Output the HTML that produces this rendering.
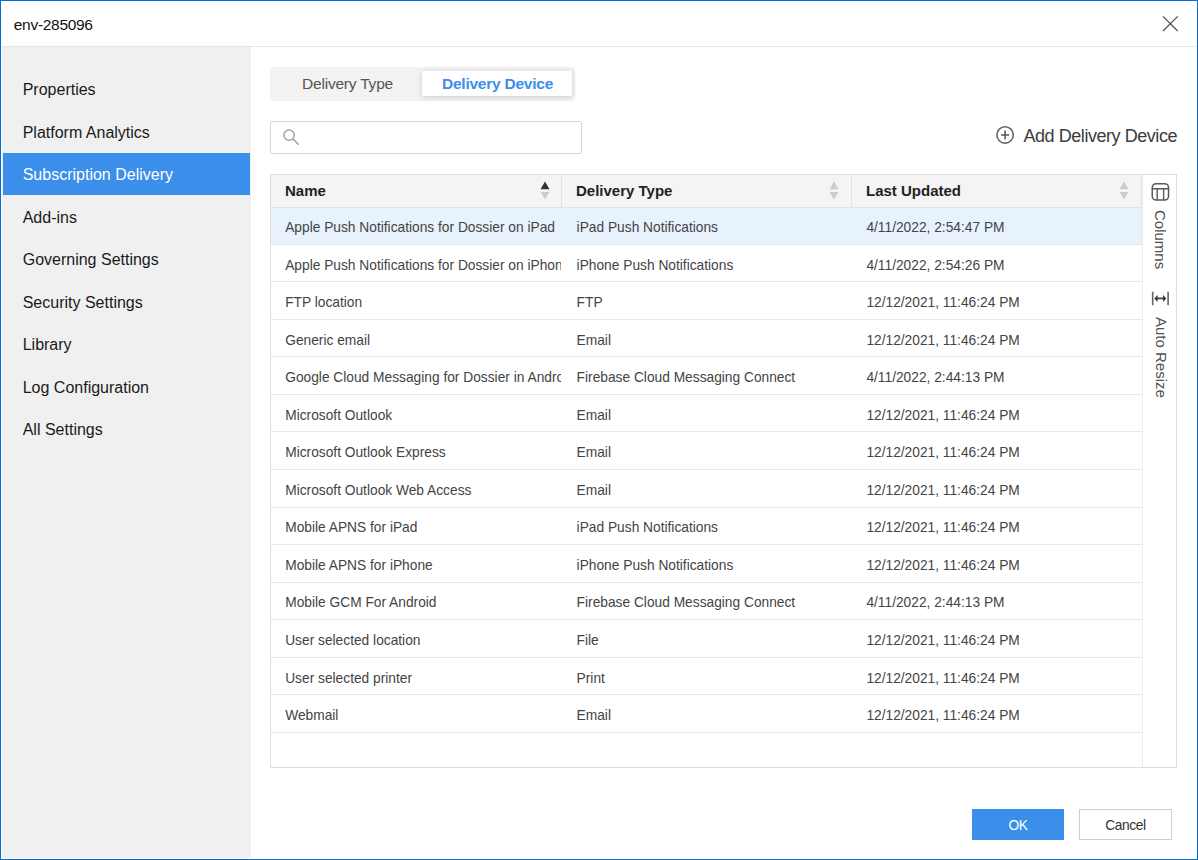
<!DOCTYPE html>
<html><head><meta charset="utf-8"><style>
*{margin:0;padding:0;box-sizing:border-box}
html,body{width:1198px;height:860px;overflow:hidden;background:#fff;font-family:"Liberation Sans",sans-serif}
.abs{position:absolute}
.bl{position:absolute;background:#006fd6}
.title{position:absolute;left:13.8px;top:14.6px;font-size:15.5px;letter-spacing:-0.3px;line-height:20px;color:#111;white-space:nowrap}
.hdrline{position:absolute;left:2px;top:46px;width:1195px;height:1px;background:#e6e6e6}
.close{position:absolute;left:1161px;top:14px}
.side{position:absolute;left:2px;top:47px;width:249px;height:811px;background:#f0f0f0}
.si{position:absolute;left:2px;width:249px;height:42.5px;line-height:42.5px;padding-left:20.7px;padding-top:1.4px;font-size:16px;color:#1a1a1a;white-space:nowrap}
.si.sel{background:#3b8eea;color:#fff;left:3px;width:247px;height:41.8px;padding-left:19.7px}
.tabs{position:absolute;left:270px;top:67px;width:305px;height:34px;background:#f3f3f3;border-radius:4px}
.t1{position:absolute;left:302px;top:71.8px;line-height:24px;font-size:15.5px;letter-spacing:-0.2px;color:#555;white-space:nowrap}
.t2{position:absolute;left:422px;top:71px;width:150px;height:25px;background:#fff;box-shadow:0 1px 6px rgba(0,0,0,.16);}
.t2 span{position:absolute;left:20px;top:0px;line-height:25px;font-size:15.5px;letter-spacing:-0.24px;font-weight:bold;color:#3b8eea;white-space:nowrap}
.search{position:absolute;left:270px;top:121px;width:312px;height:33px;border:1px solid #d6d6d6;border-radius:2px;background:#fff}
.sic{position:absolute;left:282px;top:129px}
.add{position:absolute;left:1023.5px;top:123.6px;font-size:18px;letter-spacing:-0.45px;line-height:24px;color:#3c3c3c;white-space:nowrap}
.addic{position:absolute;left:995px;top:125px}
.table{position:absolute;left:270px;top:173.6px;width:907px;height:594.4px;border:1px solid #dedede;background:#fff}
.thead{position:absolute;left:271px;top:175px;width:871px;height:33px;background:#f4f4f4;border-bottom:1px solid #e2e2e2}
.th{position:absolute;top:173.7px;height:33px;line-height:33px;font-size:15px;font-weight:bold;color:#222;white-space:nowrap}
.vdiv{position:absolute;top:175px;width:1px;height:33px;background:#e2e2e2}
.row{position:absolute;left:271px;width:871px;height:37.55px;border-bottom:1px solid #e8e8e8}
.rsel{background:#e8f2fc;border-bottom-color:#dce6f0}
.c{position:absolute;top:2.8px;height:35px;line-height:36px;font-size:13.75px;color:#444;white-space:nowrap;overflow:hidden}
.c1{left:14.2px;width:276px}
.c2{left:305.6px;width:280px}
.c3{left:595.4px;width:270px}
.panel{position:absolute;left:1141.5px;top:175px;width:1px;height:592px;background:#ececec}
.vt{position:absolute;font-size:15px;line-height:18px;color:#505050;white-space:nowrap;transform-origin:0 0;transform:rotate(90deg)}
.btn{position:absolute;top:809px;height:31px;font-size:13.75px;letter-spacing:-0.4px;line-height:32.2px;padding-top:1px;text-align:center}
.ok{left:972px;width:92px;background:#3b8eea;color:#fff}
.cancel{left:1079px;width:93px;border:1px solid #cfcfcf;line-height:30.6px;color:#333;background:#fff}
</style></head><body>
<div class="bl" style="left:0;top:0;width:1198px;height:1px"></div>
<div class="bl" style="left:0;top:859px;width:1198px;height:1px"></div>
<div class="bl" style="left:0;top:0;width:1px;height:860px"></div>
<div class="bl" style="left:1197px;top:0;width:1px;height:860px"></div>
<div class="title">env-285096</div>
<svg class="close" width="18" height="18" viewBox="0 0 18 18"><path d="M2 2.3L16.7 17M16.7 2.3L2 17" stroke="#4a4a4a" stroke-width="1.15"/></svg>
<div class="hdrline"></div>
<div class="side"></div>
<div class="si" style="top:68.0px">Properties</div>
<div class="si" style="top:110.5px">Platform Analytics</div>
<div class="si sel" style="top:153.0px">Subscription Delivery</div>
<div class="si" style="top:195.5px">Add-ins</div>
<div class="si" style="top:238.0px">Governing Settings</div>
<div class="si" style="top:280.5px">Security Settings</div>
<div class="si" style="top:323.0px">Library</div>
<div class="si" style="top:365.5px">Log Configuration</div>
<div class="si" style="top:408.0px">All Settings</div>

<div class="tabs"></div>
<div class="t1">Delivery Type</div>
<div class="t2"><span>Delivery Device</span></div>
<div class="search"></div>
<svg class="sic" width="18" height="18" viewBox="0 0 18 18"><circle cx="7.1" cy="6.1" r="5.2" fill="none" stroke="#a3a3a3" stroke-width="1.5"/><path d="M10.8 9.9L16.3 15.2" stroke="#a3a3a3" stroke-width="1.5" stroke-linecap="round"/></svg>
<svg class="addic" width="20" height="20" viewBox="0 0 20 20"><circle cx="10.1" cy="9.9" r="8.2" fill="none" stroke="#666" stroke-width="1.6"/><path d="M10.1 5.5V14.4M6 9.9H14.1" stroke="#555" stroke-width="1.5"/></svg>
<div class="add">Add Delivery Device</div>
<div class="table"></div>
<div class="row rsel" style="top:207.2px"><div class="c c1">Apple Push Notifications for Dossier on iPad</div><div class="c c2">iPad Push Notifications</div><div class="c c3">4/11/2022, 2:54:47 PM</div></div>
<div class="row" style="top:244.75px"><div class="c c1">Apple Push Notifications for Dossier on iPhone</div><div class="c c2">iPhone Push Notifications</div><div class="c c3">4/11/2022, 2:54:26 PM</div></div>
<div class="row" style="top:282.29999999999995px"><div class="c c1">FTP location</div><div class="c c2">FTP</div><div class="c c3">12/12/2021, 11:46:24 PM</div></div>
<div class="row" style="top:319.84999999999997px"><div class="c c1">Generic email</div><div class="c c2">Email</div><div class="c c3">12/12/2021, 11:46:24 PM</div></div>
<div class="row" style="top:357.4px"><div class="c c1">Google Cloud Messaging for Dossier in Android</div><div class="c c2">Firebase Cloud Messaging Connect</div><div class="c c3">4/11/2022, 2:44:13 PM</div></div>
<div class="row" style="top:394.95px"><div class="c c1">Microsoft Outlook</div><div class="c c2">Email</div><div class="c c3">12/12/2021, 11:46:24 PM</div></div>
<div class="row" style="top:432.5px"><div class="c c1">Microsoft Outlook Express</div><div class="c c2">Email</div><div class="c c3">12/12/2021, 11:46:24 PM</div></div>
<div class="row" style="top:470.04999999999995px"><div class="c c1">Microsoft Outlook Web Access</div><div class="c c2">Email</div><div class="c c3">12/12/2021, 11:46:24 PM</div></div>
<div class="row" style="top:507.59999999999997px"><div class="c c1">Mobile APNS for iPad</div><div class="c c2">iPad Push Notifications</div><div class="c c3">12/12/2021, 11:46:24 PM</div></div>
<div class="row" style="top:545.15px"><div class="c c1">Mobile APNS for iPhone</div><div class="c c2">iPhone Push Notifications</div><div class="c c3">12/12/2021, 11:46:24 PM</div></div>
<div class="row" style="top:582.7px"><div class="c c1">Mobile GCM For Android</div><div class="c c2">Firebase Cloud Messaging Connect</div><div class="c c3">4/11/2022, 2:44:13 PM</div></div>
<div class="row" style="top:620.25px"><div class="c c1">User selected location</div><div class="c c2">File</div><div class="c c3">12/12/2021, 11:46:24 PM</div></div>
<div class="row" style="top:657.8px"><div class="c c1">User selected printer</div><div class="c c2">Print</div><div class="c c3">12/12/2021, 11:46:24 PM</div></div>
<div class="row" style="top:695.3499999999999px"><div class="c c1">Webmail</div><div class="c c2">Email</div><div class="c c3">12/12/2021, 11:46:24 PM</div></div>

<div class="thead"></div>
<div class="th" style="left:285px">Name</div>
<div class="th" style="left:576px">Delivery Type</div>
<div class="th" style="left:866px">Last Updated</div>
<div class="vdiv" style="left:561px"></div>
<div class="vdiv" style="left:851px"></div>
<div class="vdiv" style="left:1141px;z-index:1"></div>
<svg class="abs" style="left:539.9px;top:181.2px" width="10" height="19" viewBox="0 0 10 19"><path d="M5 0.5L9.5 8.3H0.5Z" fill="#333"/><path d="M0.5 11H9.5L5 18.5Z" fill="#ccc"/></svg>
<svg class="abs" style="left:829.4px;top:181.2px" width="10" height="19" viewBox="0 0 10 19"><path d="M5 0.5L9.5 8.3H0.5Z" fill="#ccc"/><path d="M0.5 11H9.5L5 18.5Z" fill="#ccc"/></svg>
<svg class="abs" style="left:1119.4px;top:181.2px" width="10" height="19" viewBox="0 0 10 19"><path d="M5 0.5L9.5 8.3H0.5Z" fill="#ccc"/><path d="M0.5 11H9.5L5 18.5Z" fill="#ccc"/></svg>
<div class="panel"></div>
<svg class="abs" style="left:1150px;top:182px" width="20" height="20" viewBox="0 0 20 20"><rect x="2.25" y="1.65" width="16.3" height="16.4" rx="3.8" fill="none" stroke="#5a5a5a" stroke-width="1.5"/><path d="M2.25 6.7H18.55M7.2 6.7V18.05M13.6 6.7V18.05" stroke="#5a5a5a" stroke-width="1.4"/></svg>
<div class="vt" style="left:1168.5px;top:209.5px">Columns</div>
<svg class="abs" style="left:1150px;top:290px" width="20" height="18" viewBox="0 0 20 18"><path d="M2.7 1.7V15.2M18.1 1.7V15.2" stroke="#666" stroke-width="1.6"/><path d="M6.5 8.4H14.5" stroke="#444" stroke-width="1.8"/><path d="M4.4 8.4L7.6 4.9V11.9Z M16.3 8.4L13.1 4.9V11.9Z" fill="#333"/></svg>
<div class="vt" style="left:1169.5px;top:316.5px">Auto Resize</div>
<div class="btn ok">OK</div>
<div class="btn cancel">Cancel</div>
</body></html>
